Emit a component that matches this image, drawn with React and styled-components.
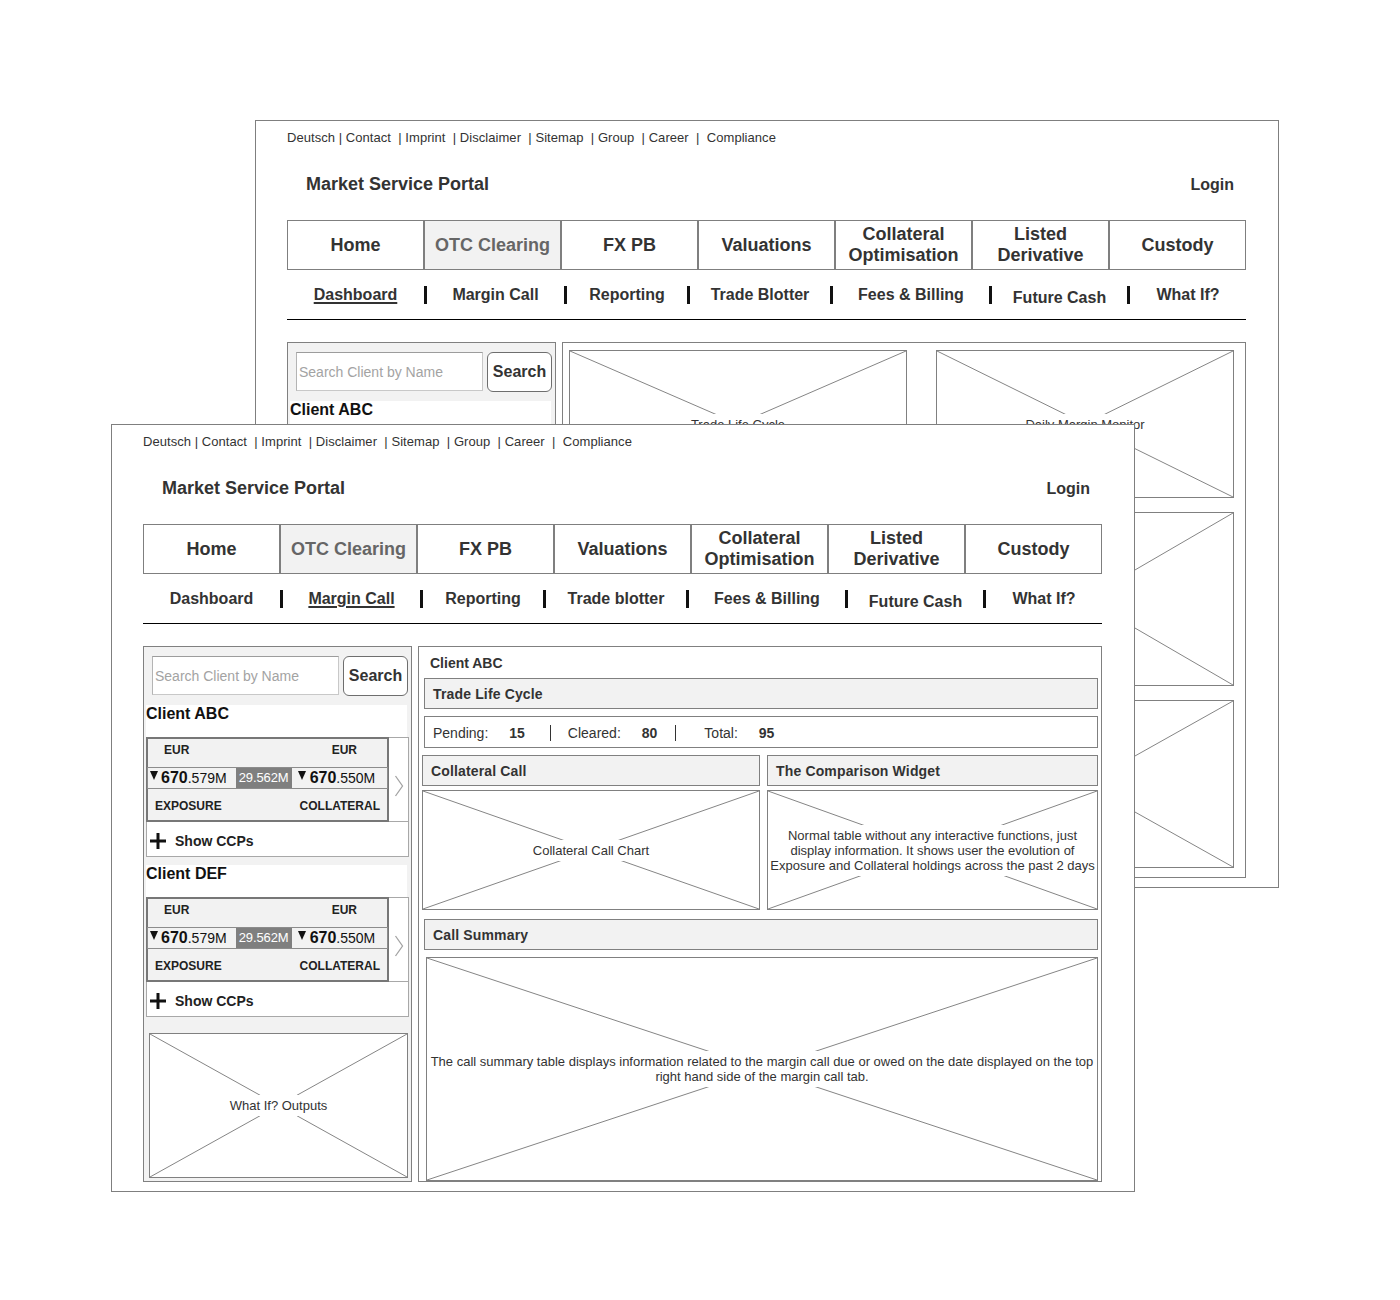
import React from 'react';
import styled, { createGlobalStyle } from 'styled-components';

const GlobalStyle = createGlobalStyle`
  html, body { margin: 0; padding: 0; background: #fff; }
  body { font-family: "Liberation Sans", Arial, Helvetica, sans-serif; color: #333; }
  *, *::before, *::after { box-sizing: border-box; }
`;

const Desktop = styled.div`
  position: relative;
  width: 1400px;
  height: 1300px;
  background: #fff;
  overflow: hidden;
`;

const Window = styled.section`
  position: absolute;
  left: ${(p) => p.$x}px;
  top: ${(p) => p.$y}px;
  width: 1024px;
  height: 768px;
  border: 1px solid #7f7f7f;
  background: #fff;
  padding: 0 32px 9px 31px;
  display: flex;
  flex-direction: column;
`;

const TopLinks = styled.div`
  height: 34px;
  padding-bottom: 2px;
  display: flex;
  align-items: center;
  font-size: 13px;
  letter-spacing: 0.05px;
  white-space: pre;
  color: #333;
`;

const Masthead = styled.header`
  height: 65px;
  display: flex;
  justify-content: space-between;
  align-items: flex-start;
  padding: 18px 12px 0 19px;
`;

const Title = styled.h1`
  margin: 0;
  font-size: 18px;
  line-height: 22px;
  font-weight: bold;
  color: #333;
`;

const Login = styled.span`
  margin-top: 2px;
  font-size: 16px;
  line-height: 20px;
  font-weight: bold;
  color: #333;
`;

const MainNav = styled.nav`
  display: flex;
  height: 50px;
`;

const NavCell = styled.div`
  flex: 0 0 137px;
  height: 50px;
  border: 1px solid #7f7f7f;
  display: flex;
  align-items: center;
  justify-content: center;
  text-align: center;
  font-size: 18px;
  font-weight: bold;
  line-height: 21px;
  color: ${(p) => (p.$active ? '#666' : '#333')};
  background: ${(p) => (p.$active ? '#f2f2f2' : '#fff')};
`;

const SubNav = styled.nav`
  display: flex;
  align-items: center;
  height: 50px;
  border-bottom: 1px solid #000;
`;

const SubItem = styled.span`
  flex: 0 0 ${(p) => p.$w}px;
  text-align: center;
  font-size: 16px;
  font-weight: bold;
  line-height: 19px;
  color: #333;
  margin-top: ${(p) => (p.$low ? 6 : 0)}px;
  text-decoration: ${(p) => (p.$active ? 'underline' : 'none')};
  text-decoration-thickness: 2px;
  text-underline-offset: 2px;
`;

const SubSep = styled.span`
  flex: 0 0 3px;
  height: 18px;
  background: #111;
`;

const Body = styled.div`
  flex: 1;
  min-height: 0;
  display: flex;
  gap: 6px;
  margin-top: 22px;
`;

const Panel = styled.div`
  border: 1px solid #808080;
`;

const ClientPanel = styled(Panel)`
  flex: 0 0 268px;
  background: #f2f2f2;
  display: flex;
  flex-direction: column;
  padding: 9px 2px 3px 2px;
`;

const SearchRow = styled.div`
  display: flex;
  gap: 4px;
  height: 39px;
  margin: 0 1px 0 6px;
`;

const SearchInput = styled.input`
  flex: 1;
  min-width: 0;
  height: 39px;
  border: 1px solid #c8c8c8;
  border-top-color: #9c9c9c;
  border-left-color: #b4b4b4;
  background: #fff;
  padding: 0 2px;
  font-family: "Liberation Sans", Arial, sans-serif;
  font-size: 14px;
  color: #333;
  outline: none;
  &::placeholder { color: #a3a3a3; }
`;

const SearchButton = styled.button`
  flex: 0 0 65px;
  height: 40px;
  border: 1px solid #6e6e6e;
  border-radius: 6px;
  background: #fff;
  padding: 0;
  font-family: "Liberation Sans", Arial, sans-serif;
  font-size: 16px;
  font-weight: bold;
  color: #333;
`;

const ClientBlock = styled.div`
  margin-top: ${(p) => p.$mt}px;
  display: flex;
  flex-direction: column;
`;

const ClientName = styled.div`
  height: 32px;
  margin-right: 2px;
  background: #fff;
  font-size: 16px;
  font-weight: bold;
  line-height: 17px;
  color: #111;
`;

const Card = styled.div`
  border: 1px solid #a8a8a8;
  background: #fff;
  display: flex;
  flex-direction: column;
`;

const CardTop = styled.div`
  display: flex;
  border-bottom: 1px solid #a8a8a8;
`;

const Figures = styled.div`
  flex: 0 0 243px;
  height: 85px;
  margin: -1px 0 -1px -1px;
  border: 2px solid #777;
  background: #f2f2f2;
  display: flex;
  flex-direction: column;
`;

const CurrencyRow = styled.div`
  height: 28px;
  display: flex;
  justify-content: space-between;
  padding: 4px 30px 0 16px;
  font-size: 12px;
  line-height: 14px;
  font-weight: bold;
  color: #222;
`;

const ValueRow = styled.div`
  height: 22px;
  margin: 0 -1px;
  border: 1px solid #8c8c8c;
  display: flex;
  align-items: stretch;
  color: #111;
`;

const Amount = styled.div`
  display: flex;
  align-items: baseline;
  line-height: 20px;
  margin-left: ${(p) => p.$ml}px;
`;

const DownMark = styled.span`
  align-self: flex-start;
  margin: 3px ${(p) => p.$gap}px 0 0;
  width: 0;
  height: 0;
  border-left: 4px solid transparent;
  border-right: 4px solid transparent;
  border-top: 9px solid #111;
`;

const Big = styled.span`
  font-size: 16px;
  font-weight: bold;
`;

const Small = styled.span`
  font-size: 14px;
`;

const Chip = styled.span`
  flex: 0 0 56px;
  margin-left: 9px;
  background: #7f7f7f;
  color: #fff;
  font-size: 13px;
  line-height: 20px;
  text-align: center;
  letter-spacing: -0.1px;
`;

const LabelRow = styled.div`
  flex: 1;
  display: flex;
  justify-content: space-between;
  padding: 10px 7px 0 7px;
  font-size: 12px;
  line-height: 14px;
  font-weight: bold;
  color: #222;
`;

const ChevronCell = styled.div`
  flex: 1;
  display: flex;
  align-items: center;
  justify-content: center;
  padding-top: 12px;
`;

const CcpRow = styled.div`
  height: 34px;
  display: flex;
  align-items: center;
  gap: 9px;
  padding: 4px 0 0 3px;
  font-size: 14px;
  font-weight: bold;
  color: #222;
`;

const Placeholder = styled.div`
  position: relative;
  display: flex;
  align-items: center;
  justify-content: center;
  border: 1px solid #808080;
  background: #fff;
  overflow: hidden;
`;

const Cross = styled.svg`
  position: absolute;
  inset: 0;
  width: 100%;
  height: 100%;
  line { stroke: #858585; stroke-width: 1; }
`;

const PlaceholderLabel = styled.span`
  position: relative;
  background: #fff;
  padding: 3px 1px;
  font-size: 13px;
  line-height: 15px;
  text-align: center;
  color: #333;
  white-space: nowrap;
`;

function Wire({ label, className }) {
  return (
    <Placeholder className={className}>
      <Cross viewBox="0 0 100 100" preserveAspectRatio="none" aria-hidden="true">
        <line x1="0" y1="0" x2="100" y2="100" vectorEffect="non-scaling-stroke" />
        <line x1="100" y1="0" x2="0" y2="100" vectorEffect="non-scaling-stroke" />
      </Cross>
      {label && <PlaceholderLabel>{label}</PlaceholderLabel>}
    </Placeholder>
  );
}

const WhatIfBox = styled(Wire)`
  flex: 1;
  margin: 16px 1px 0 3px;
`;

const DetailPanel = styled(Panel)`
  flex: 1;
  min-width: 0;
  display: flex;
  flex-direction: column;
  padding: 0 3px;
  background: #fff;
`;

const PanelTitle = styled.div`
  height: 31px;
  padding: 8px 0 0 8px;
  font-size: 14px;
  line-height: 17px;
  font-weight: bold;
  color: #333;
`;

const SectionBar = styled.div`
  height: 31px;
  flex: 0 0 31px;
  display: flex;
  align-items: center;
  padding-left: 8px;
  margin: ${(p) => p.$m || '0'};
  background: #f2f2f2;
  border: 1px solid #808080;
  font-size: 14px;
  font-weight: bold;
  letter-spacing: 0.15px;
  color: #333;
`;

const StatsBar = styled.div`
  height: 32px;
  display: flex;
  align-items: center;
  margin: 7px 0 0 2px;
  padding: 2px 0 0 8px;
  border: 1px solid #808080;
  font-size: 14px;
  color: #333;
`;

const StatValue = styled.b`
  margin-left: 21px;
`;

const StatSep = styled.span`
  width: 1px;
  height: 16px;
  background: #333;
  margin: 0 ${(p) => p.$mr}px 0 ${(p) => p.$ml}px;
`;

const Columns = styled.div`
  display: grid;
  grid-template-columns: 338px 1fr;
  column-gap: 7px;
  margin-top: 7px;
`;

const Column = styled.div`
  display: flex;
  flex-direction: column;
`;

const ColumnChart = styled(Wire)`
  height: 120px;
  margin-top: 4px;
`;

const SummaryChart = styled(Wire)`
  flex: 1;
  margin: 7px 0 0 4px;
`;

const MonitorPanel = styled(Panel)`
  flex: 1;
  display: grid;
  grid-template-columns: 338px 298px;
  grid-template-rows: 148px 174px 168px;
  column-gap: 29px;
  row-gap: 14px;
  align-content: start;
  padding: 7px 0 0 6px;
  background: #fff;
`;

const topLinks = 'Deutsch | Contact  | Imprint  | Disclaimer  | Sitemap  | Group  | Career  |  Compliance';

const mainNav = [
  { label: ['Home'] },
  { label: ['OTC Clearing'], active: true },
  { label: ['FX PB'] },
  { label: ['Valuations'] },
  { label: ['Collateral', 'Optimisation'] },
  { label: ['Listed', 'Derivative'] },
  { label: ['Custody'] },
];

const subNavItems = (tradeLabel) => [
  { label: 'Dashboard', w: 137 },
  { label: 'Margin Call', w: 137 },
  { label: 'Reporting', w: 120 },
  { label: tradeLabel, w: 140 },
  { label: 'Fees & Billing', w: 156 },
  { label: 'Future Cash', w: 135, low: true },
  { label: 'What If?', w: 116 },
];

function Chevron() {
  return (
    <svg width="10" height="22" viewBox="0 0 10 22" aria-hidden="true">
      <polyline points="1.5,1 8.5,11 1.5,21" fill="none" stroke="#a3a3a3" strokeWidth="1.3" />
    </svg>
  );
}

function PlusIcon() {
  return (
    <svg width="16" height="16" viewBox="0 0 16 16" aria-hidden="true">
      <rect x="0" y="6.5" width="16" height="3" fill="#111" />
      <rect x="6.5" y="0" width="3" height="16" fill="#111" />
    </svg>
  );
}

function ClientCard({ name, mt, brief }) {
  return (
    <ClientBlock $mt={mt}>
      <ClientName>{name}</ClientName>
      {!brief && (
        <Card>
          <CardTop>
            <Figures>
              <CurrencyRow>
                <span>EUR</span>
                <span>EUR</span>
              </CurrencyRow>
              <ValueRow>
                <Amount $ml={2}>
                  <DownMark $gap={3} />
                  <Big>670</Big>
                  <Small>.579M</Small>
                </Amount>
                <Chip>29.562M</Chip>
                <Amount $ml={6}>
                  <DownMark $gap={4} />
                  <Big>670</Big>
                  <Small>.550M</Small>
                </Amount>
              </ValueRow>
              <LabelRow>
                <span>EXPOSURE</span>
                <span>COLLATERAL</span>
              </LabelRow>
            </Figures>
            <ChevronCell>
              <Chevron />
            </ChevronCell>
          </CardTop>
          <CcpRow>
            <PlusIcon />
            <span>Show CCPs</span>
          </CcpRow>
        </Card>
      )}
    </ClientBlock>
  );
}

function ClientList({ brief }) {
  return (
    <ClientPanel>
      <SearchRow>
        <SearchInput placeholder="Search Client by Name" readOnly />
        <SearchButton type="button">Search</SearchButton>
      </SearchRow>
      <ClientCard name="Client ABC" mt={10} brief={brief} />
      {!brief && (
        <>
          <ClientCard name="Client DEF" mt={8} />
          <WhatIfBox label="What If? Outputs" />
        </>
      )}
    </ClientPanel>
  );
}

function PortalWindow({ x, y, activeSub, tradeLabel, children }) {
  const items = subNavItems(tradeLabel);
  return (
    <Window $x={x} $y={y}>
      <TopLinks>{topLinks}</TopLinks>
      <Masthead>
        <Title>Market Service Portal</Title>
        <Login>Login</Login>
      </Masthead>
      <MainNav>
        {mainNav.map((item) => (
          <NavCell key={item.label.join(' ')} $active={item.active}>
            <span>
              {item.label.map((line, i) => (
                <React.Fragment key={line}>
                  {i > 0 && <br />}
                  {line}
                </React.Fragment>
              ))}
            </span>
          </NavCell>
        ))}
      </MainNav>
      <SubNav>
        {items.map((item, i) => (
          <React.Fragment key={item.label}>
            {i > 0 && <SubSep />}
            <SubItem $w={item.w} $low={item.low} $active={item.label === activeSub}>
              {item.label}
            </SubItem>
          </React.Fragment>
        ))}
      </SubNav>
      <Body>{children}</Body>
    </Window>
  );
}

export default function App() {
  return (
    <Desktop>
      <GlobalStyle />
      <PortalWindow x={255} y={120} activeSub="Dashboard" tradeLabel="Trade Blotter">
        <ClientList brief />
        <MonitorPanel>
          <Wire label="Trade Life Cycle" />
          <Wire label="Daily Margin Monitor" />
          <Wire />
          <Wire />
          <Wire />
          <Wire />
        </MonitorPanel>
      </PortalWindow>

      <PortalWindow x={111} y={424} activeSub="Margin Call" tradeLabel="Trade blotter">
        <ClientList />
        <DetailPanel>
          <PanelTitle>Client ABC</PanelTitle>
          <SectionBar $m="0 0 0 2px">Trade Life Cycle</SectionBar>
          <StatsBar>
            <span>Pending:</span>
            <StatValue>15</StatValue>
            <StatSep $ml={25} $mr={17} />
            <span>Cleared:</span>
            <StatValue>80</StatValue>
            <StatSep $ml={18} $mr={28} />
            <span>Total:</span>
            <StatValue>95</StatValue>
          </StatsBar>
          <Columns>
            <Column>
              <SectionBar>Collateral Call</SectionBar>
              <ColumnChart label="Collateral Call Chart" />
            </Column>
            <Column>
              <SectionBar>The Comparison Widget</SectionBar>
              <ColumnChart
                label={
                  <>
                    Normal table without any interactive functions, just
                    <br />
                    display information. It shows user the evolution of
                    <br />
                    Exposure and Collateral holdings across the past 2 days
                  </>
                }
              />
            </Column>
          </Columns>
          <SectionBar $m="9px 0 0 2px">Call Summary</SectionBar>
          <SummaryChart
            label={
              <>
                The call summary table displays information related to the margin call due or owed on the date displayed on the top
                <br />
                right hand side of the margin call tab.
              </>
            }
          />
        </DetailPanel>
      </PortalWindow>
    </Desktop>
  );
}
